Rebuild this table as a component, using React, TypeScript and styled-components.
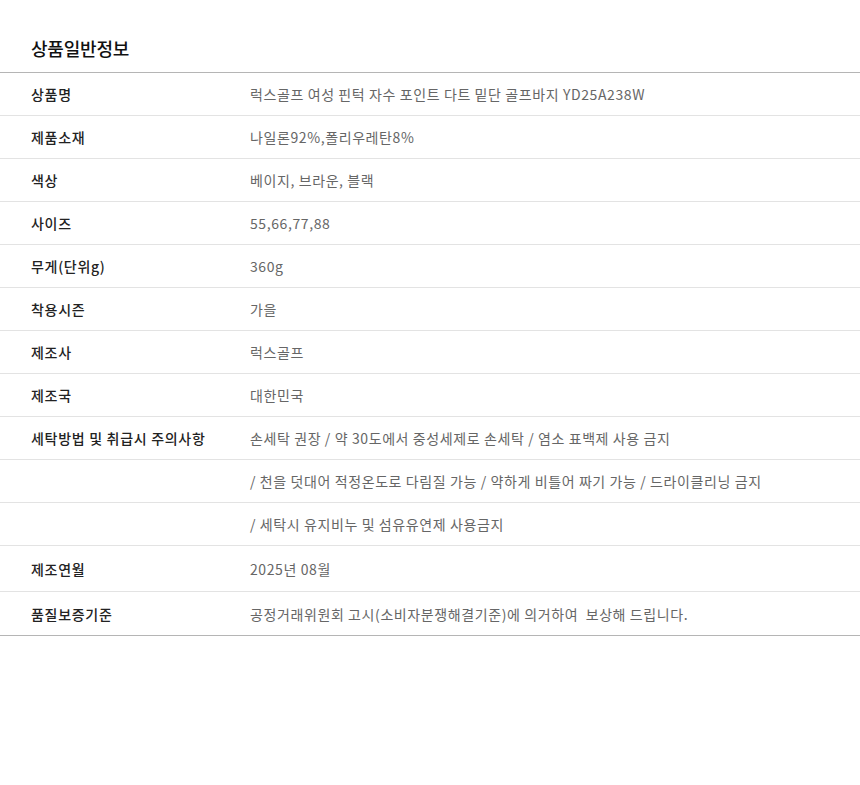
import React from "react";
import styled, { createGlobalStyle } from "styled-components";

const GlobalStyle = createGlobalStyle`
  body {
    margin: 0;
    background: #ffffff;
    font-family: "Noto Sans CJK KR", "Noto Sans", sans-serif;
  }
`;

interface Row {
  label: string;
  value: string;
  tall?: number;
}

const rows: Row[] = [
  { label: "상품명", value: "럭스골프 여성 핀턱 자수 포인트 다트 밑단 골프바지 YD25A238W" },
  { label: "제품소재", value: "나일론92%,폴리우레탄8%" },
  { label: "색상", value: "베이지, 브라운, 블랙" },
  { label: "사이즈", value: "55,66,77,88" },
  { label: "무게(단위g)", value: "360g" },
  { label: "착용시즌", value: "가을" },
  { label: "제조사", value: "럭스골프" },
  { label: "제조국", value: "대한민국" },
  { label: "세탁방법 및 취급시 주의사항", value: "손세탁 권장 / 약 30도에서 중성세제로 손세탁 / 염소 표백제 사용 금지" },
  { label: "", value: "/ 천을 덧대어 적정온도로 다림질 가능 / 약하게 비틀어 짜기 가능 / 드라이클리닝 금지" },
  { label: "", value: "/ 세탁시 유지비누 및 섬유유연제 사용금지" },
  { label: "제조연월", value: "2025년 08월", tall: 45 },
  { label: "품질보증기준", value: "공정거래위원회 고시(소비자분쟁해결기준)에 의거하여  보상해 드립니다.", tall: 43 },
];

const App: React.FC = () => {
  return (
    <>
      <GlobalStyle />
      <Section>
        <Title>상품일반정보</Title>
        <Table>
          {rows.map((r, i) => (
            <InfoRow key={i} $height={r.tall ?? 42}>
              <Label>{r.label}</Label>
              <Value>{r.value}</Value>
            </InfoRow>
          ))}
        </Table>
      </Section>
    </>
  );
};
export default App;

const Section = styled.section`
  width: 860px;
  padding-top: 36px;
`;

const Title = styled.h2`
  margin: 0 0 12px 31px;
  font-size: 18px;
  line-height: 24px;
  font-weight: 500;
  color: #111;
  letter-spacing: -0.2px;
`;

const Table = styled.div`
  border-top: 1px solid #b5b5b5;
  border-bottom: 1px solid #b5b5b5;
`;

const InfoRow = styled.div<{ $height: number }>`
  display: grid;
  grid-template-columns: 250px 1fr;
  align-items: center;
  height: ${(p) => p.$height}px;
  border-bottom: 1px solid #e3e3e3;
  &:last-child {
    border-bottom: none;
  }
`;

const Label = styled.div`
  padding-left: 31px;
  font-size: 14px;
  font-weight: 500;
  color: #222;
  letter-spacing: 0.7px;
  white-space: nowrap;
`;

const Value = styled.div`
  font-size: 14px;
  font-weight: 400;
  color: #666;
  letter-spacing: 0.6px;
  white-space: pre;
`;
